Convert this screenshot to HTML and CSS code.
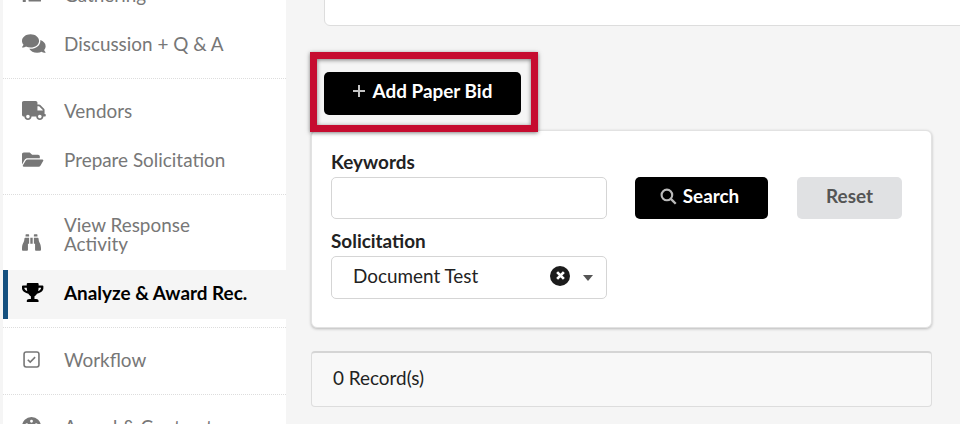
FILE: index.html
```html
<!DOCTYPE html>
<html lang="en">
<head>
    <meta charset="UTF-8">
    <meta name="viewport" content="width=device-width, initial-scale=1.0">
    <title>Analyze &amp; Award Rec.</title>
    <link rel="stylesheet" href="styles.css">
</head>
<body>
    <div class="page">
        <nav class="sidebar">
            <div class="nav-group">
                <a class="nav-item">
                    <svg class="nav-icon nav-icon-tasks" viewBox="0 0 512 512" preserveAspectRatio="xMinYMid meet"><path d="M36 392h50a16 16 0 0 1 16 16v64a16 16 0 0 1-16 16H36a16 16 0 0 1-16-16v-64a16 16 0 0 1 16-16zm156 16h304a16 16 0 0 1 16 16v32a16 16 0 0 1-16 16H192a16 16 0 0 1-16-16v-32a16 16 0 0 1 16-16z"/></svg>
                    <span>Gathering</span>
                </a>
                <a class="nav-item">
                    <svg class="nav-icon nav-icon-wide" viewBox="0 0 576 512" preserveAspectRatio="xMinYMid meet"><path d="M416 192c0-88.4-93.1-160-208-160S0 103.6 0 192c0 34.3 14.1 65.9 38 92-13.4 30.2-35.5 54.2-35.8 54.5-2.2 2.3-2.8 5.7-1.5 8.7S4.8 352 8 352c36.6 0 66.9-12.3 88.7-25 32.2 15.7 70.3 25 111.3 25 114.9 0 208-71.6 208-160zm122 220c23.9-26 38-57.7 38-92 0-66.9-53.5-124.2-129.3-148.1.9 6.6 1.3 13.3 1.3 20.1 0 105.9-107.7 192-240 192-10.8 0-21.3-.8-31.7-1.9C207.8 439.6 281.8 480 368 480c41 0 79.1-9.2 111.3-25 21.8 12.7 52.1 25 88.7 25 3.2 0 6.1-1.9 7.3-4.8 1.3-2.9.7-6.3-1.5-8.7-.3-.3-22.4-24.2-35.8-54.5z"/></svg>
                    <span>Discussion + Q &amp; A</span>
                </a>
            </div>
            <div class="nav-group">
                <a class="nav-item">
                    <svg class="nav-icon" viewBox="0 0 640 512" preserveAspectRatio="xMinYMid meet"><path d="M624 352h-16V243.9c0-12.7-5.1-24.9-14.1-33.9L494 110.1c-9-9-21.2-14.1-33.9-14.1H416V48c0-26.5-21.5-48-48-48H48C21.5 0 0 21.5 0 48v320c0 26.5 21.5 48 48 48h16c0 53 43 96 96 96s96-43 96-96h128c0 53 43 96 96 96s96-43 96-96h48c8.8 0 16-7.2 16-16v-32c0-8.8-7.2-16-16-16zM160 464c-26.5 0-48-21.5-48-48s21.5-48 48-48 48 21.5 48 48-21.5 48-48 48zm320 0c-26.5 0-48-21.5-48-48s21.5-48 48-48 48 21.5 48 48-21.5 48-48 48zm80-208H416V144h44.1l99.9 99.9V256z"/></svg>
                    <span>Vendors</span>
                </a>
                <a class="nav-item">
                    <svg class="nav-icon" viewBox="0 0 576 512" preserveAspectRatio="xMinYMid meet"><path d="M572.694 292.093L500.27 416.248A63.997 63.997 0 0 1 444.989 448H45.025c-18.523 0-30.064-20.093-20.731-36.093l72.424-124.155A64 64 0 0 1 152 256h399.964c18.523 0 30.064 20.093 20.73 36.093zM152 224h328v-48c0-26.51-21.49-48-48-48H272l-64-64H48C21.49 64 0 85.49 0 112v278.046l69.077-118.418C86.214 242.25 117.989 224 152 224z"/></svg>
                    <span>Prepare Solicitation</span>
                </a>
            </div>
            <div class="nav-group nav-group-active">
                <a class="nav-item nav-item-tall">
                    <svg class="nav-icon" viewBox="0 0 512 512" preserveAspectRatio="xMinYMid meet"><path d="M416 48c0-8.84-7.16-16-16-16h-64c-8.84 0-16 7.16-16 16v48h96V48zM63.91 159.99C61.4 253.84 3.46 274.22 0 404v44c0 17.67 14.33 32 32 32h96c17.67 0 32-14.33 32-32V288h32V128H95.84c-17.63 0-31.45 14.37-31.93 31.99zm384.18 0c-.48-17.62-14.3-31.99-31.93-31.99H320v160h32v160c0 17.67 14.33 32 32 32h96c17.67 0 32-14.33 32-32v-44c-3.46-129.78-61.4-150.16-63.91-244.01zM176 32h-64c-8.84 0-16 7.16-16 16v48h96V48c0-8.84-7.16-16-16-16zm48 256h64V128h-64v160z"/></svg>
                    <span>View Response<br>Activity</span>
                </a>
                <a class="nav-item active">
                    <svg class="nav-icon" viewBox="0 0 576 512" preserveAspectRatio="xMinYMid meet"><path d="M552 64H448V24c0-13.3-10.7-24-24-24H152c-13.3 0-24 10.7-24 24v40H24C10.7 64 0 74.7 0 88v56c0 35.7 22.5 72.4 61.9 100.7 31.5 22.7 69.8 37.1 110 41.7C203.3 338.5 240 360 240 360v72h-48c-35.3 0-64 20.7-64 56v12c0 6.6 5.4 12 12 12h296c6.6 0 12-5.4 12-12v-12c0-35.3-28.7-56-64-56h-48v-72s36.7-21.5 68.1-73.6c40.3-4.6 78.7-19 110-41.7 39.3-28.3 61.9-65 61.9-100.7V88c0-13.3-10.7-24-24-24zM99.3 192.8C74.9 175.2 64 155.6 64 144v-16h64.2c1 32.6 5.8 61.2 12.8 86.2-15.1-5.2-29.2-12.4-41.7-21.4zM512 144c0 16.1-17.7 36.1-35.3 48.8-12.5 9-26.7 16.2-41.8 21.4 7-25 11.8-53.6 12.8-86.2H512v16z"/></svg>
                    <span>Analyze &amp; Award Rec.</span>
                </a>
            </div>
            <div class="nav-group">
                <a class="nav-item">
                    <svg class="nav-icon nav-icon-small" viewBox="0 0 16 16"><rect x="1" y="1" width="14" height="14" rx="2" fill="none" stroke="currentColor" stroke-width="1.5"/><path d="M4.5 8.2l2.3 2.2 4.6-4.6" fill="none" stroke="currentColor" stroke-width="1.5"/></svg>
                    <span>Workflow</span>
                </a>
            </div>
            <div class="nav-group">
                <a class="nav-item">
                    <svg class="nav-icon" viewBox="0 0 20 20" preserveAspectRatio="xMinYMid meet"><path fill-rule="evenodd" d="M10 0a10 10 0 1 0 0 20 10 10 0 0 0 0-20zM5 6.5a1.5 1.5 0 1 1 0 3 1.5 1.5 0 0 1 0-3zm5-3.5a1.5 1.5 0 1 1 0 3 1.5 1.5 0 0 1 0-3zm5 3.5a1.5 1.5 0 1 1 0 3 1.5 1.5 0 0 1 0-3z"/></svg>
                    <span>Award &amp; Contract</span>
                </a>
            </div>
        </nav>

        <main class="content">
            <div class="top-card"></div>

            <div class="add-row">
                <button class="btn btn-black btn-add">
                    <svg class="plus-icon" viewBox="0 0 12 12"><path d="M6 0v12M0 6h12" stroke="currentColor" stroke-width="2"/></svg>
                    Add Paper Bid
                </button>
                <div class="highlight"></div>
            </div>

            <section class="search-card">
                <div class="search-row">
                    <div class="field">
                        <label class="field-label">Keywords</label>
                        <input class="text-input" type="text">
                    </div>
                    <button class="btn btn-black btn-search">
                        <svg class="search-icon" viewBox="0 0 16 16"><circle cx="6.5" cy="6.5" r="5" fill="none" stroke="currentColor" stroke-width="2"/><path d="M10.2 10.2l4.6 4.6" stroke="currentColor" stroke-width="2.2"/></svg>
                        Search
                    </button>
                    <button class="btn btn-reset">Reset</button>
                </div>
                <div class="field">
                    <label class="field-label">Solicitation</label>
                    <div class="select-box">
                        <span class="select-value">Document Test</span>
                        <span class="clear-btn">
                            <svg viewBox="0 0 8 8"><path d="M1 1l6 6m0-6l-6 6" stroke="#fff" stroke-width="2.4"/></svg>
                        </span>
                        <span class="caret"></span>
                    </div>
                </div>
            </section>

            <div class="records">0 Record(s)</div>
        </main>
    </div>
</body>
</html>
```

FILE: styles.css
```css
html, body {
    margin: 0;
    padding: 0;
    height: 424px;
    overflow: hidden;
}

body {
    font-family: Lato, "Open Sans", sans-serif;
    font-size: 18.9px;
    color: #222;
    background-color: #f5f5f5;
}

.page {
    display: flex;
    height: 424px;
    overflow: hidden;
}

/* Sidebar */
.sidebar {
    width: 283px;
    flex-shrink: 0;
    margin-left: 3px;
    margin-top: -29px;
    background-color: #fff;
}

.nav-group {
    padding: 0 0 9px;
    border-bottom: 1px dotted #ddd;
    margin-bottom: 8px;
}

.nav-group-active {
    padding-bottom: 8px;
}

.nav-item {
    display: flex;
    align-items: center;
    height: 47px;
    padding-left: 19px;
    padding-bottom: 2px;
    color: #777;
    line-height: 19px;
}

.nav-item-tall {
    height: 61px;
    padding-bottom: 6px;
}

.nav-icon {
    width: 24px;
    height: 19px;
    margin-right: 18px;
    flex-shrink: 0;
    fill: currentColor;
}

.nav-icon-wide {
    height: 21px;
}

.nav-icon-tasks {
    margin-top: -2px;
}

.nav-icon-small {
    width: 17px;
    height: 17px;
    margin-left: 1px;
    margin-right: 24px;
}

.nav-item-tall .nav-icon {
    margin-top: 18px;
}

.active {
    height: 45px;
    padding-left: 14px;
    padding-bottom: 4px;
    border-left: 5px solid #14507f;
    background-color: #f5f5f5;
    color: #000;
    font-weight: 700;
}

/* Main */
.content {
    flex: 1;
    min-width: 0;
    position: relative;
}

.top-card {
    height: 39px;
    margin: -15px -20px 0 38px;
    background-color: #fff;
    border: 1px solid #ddd;
    border-radius: 6px;
}

.add-row {
    position: relative;
    height: 104px;
    margin-left: 38px;
    padding-top: 46px;
    box-sizing: border-box;
}

.btn {
    display: inline-flex;
    align-items: center;
    justify-content: center;
    border: none;
    border-radius: 5px;
    font-family: inherit;
    font-size: 18.9px;
    font-weight: 700;
    padding: 0 0 5px;
}

.btn-black {
    background-color: #000;
    color: #fff;
}

.btn-add {
    width: 197px;
    height: 43px;
    padding-bottom: 7px;
}

.plus-icon {
    width: 12px;
    height: 12px;
    margin-right: 8px;
    margin-top: 1px;
    color: #c4c4c4;
}

/* red box drawn over the button */
.highlight {
    position: absolute;
    left: -14px;
    top: 26px;
    width: 228px;
    height: 80px;
    box-sizing: border-box;
    border: 7px solid #c60c30;
    box-shadow: 0 1px 4px rgba(0, 0, 0, 0.5), inset 0 1px 4px rgba(0, 0, 0, 0.5);
}

.search-card {
    width: 621px;
    height: 198px;
    box-sizing: border-box;
    margin-left: 25px;
    padding: 21px 19px 0;
    background-color: #fff;
    border: 1px solid #e2e2e2;
    border-radius: 6px;
    box-shadow: 0 1px 3px rgba(0, 0, 0, 0.25);
}

.search-row {
    display: flex;
    align-items: flex-end;
    margin-bottom: 12px;
}

.field {
    display: flex;
    flex-direction: column;
    width: 276px;
}

.field-label {
    font-weight: 700;
    line-height: 20px;
    height: 25px;
}

.text-input {
    height: 42px;
    box-sizing: border-box;
    border: 1px solid #d5d5d5;
    border-radius: 5px;
}

.btn-search {
    width: 133px;
    height: 42px;
    margin-left: 28px;
    padding-right: 4px;
}

.search-icon {
    width: 17px;
    height: 17px;
    margin-right: 6px;
    margin-top: 1px;
    color: #bbb;
}

.btn-reset {
    width: 105px;
    height: 42px;
    margin-left: 29px;
    background-color: #e0e1e3;
    color: #555;
}

.select-box {
    display: flex;
    align-items: center;
    height: 43px;
    box-sizing: border-box;
    padding: 0 13px 0 21px;
    border: 1px solid #d5d5d5;
    border-radius: 5px;
}

.select-value {
    flex: 1;
    margin-top: -5px;
}

.clear-btn {
    display: flex;
    align-items: center;
    justify-content: center;
    width: 20px;
    height: 20px;
    margin-top: -4px;
    border-radius: 50%;
    background-color: #1c1c1c;
}

.clear-btn svg {
    width: 9px;
    height: 9px;
}

.caret {
    width: 0;
    height: 0;
    margin-top: 1px;
    margin-left: 13px;
    border-left: 5px solid transparent;
    border-right: 5px solid transparent;
    border-top: 6px solid #555;
}

.records {
    width: 621px;
    height: 56px;
    box-sizing: border-box;
    margin: 23px 0 0 25px;
    padding: 0 0 5px 21px;
    display: flex;
    align-items: center;
    background-color: #f8f8f8;
    border: 1px solid #ddd;
    border-top: 2px solid #d5d5d5;
    border-radius: 4px;
}
```
